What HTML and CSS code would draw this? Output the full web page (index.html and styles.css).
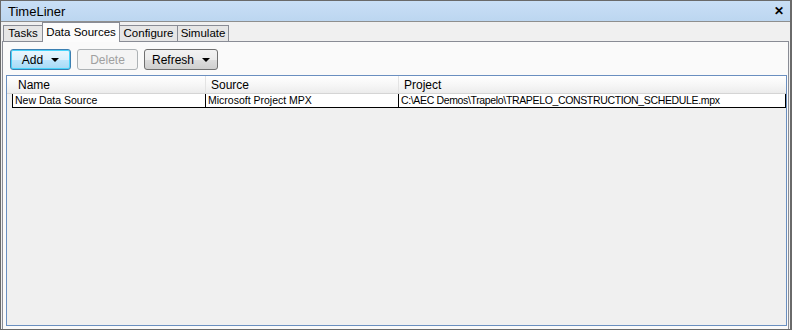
FILE: index.html
```html
<!DOCTYPE html>
<html>
<head>
<meta charset="utf-8">
<link rel="stylesheet" href="styles.css">
</head>
<body>
<div class="window">
  <div class="titlebar">
    <span class="title">TimeLiner</span>
    <span class="close">✕</span>
  </div>
  <div class="tabstrip">
    <div class="tab t1">Tasks</div>
    <div class="tab t2 active">Data Sources</div>
    <div class="tab t3">Configure</div>
    <div class="tab t4">Simulate</div>
  </div>
  <div class="page">
    <div class="toolbar">
      <button class="btn focused">Add <span class="arrow"></span></button>
      <button class="btn disabled">Delete</button>
      <button class="btn wide">Refresh <span class="arrow"></span></button>
    </div>
    <div class="list">
      <div class="header">
        <div class="col c1">Name</div>
        <div class="col c2">Source</div>
        <div class="col c3">Project</div>
      </div>
      <div class="row">
        <div class="cell c1">New Data Source</div>
        <div class="cell c2">Microsoft Project MPX</div>
        <div class="cell c3">C:\AEC Demos\Trapelo\TRAPELO_CONSTRUCTION_SCHEDULE.mpx</div>
      </div>
    </div>
  </div>
</div>
</body>
</html>
```
FILE: styles.css
```css
* { box-sizing: border-box; }
html, body { margin: 0; padding: 0; }
body {
  width: 792px; height: 330px; overflow: hidden;
  font-family: "Liberation Sans", Arial, sans-serif;
  font-size: 11px; color: #000;
  background: #fff;
}
.window {
  width: 792px; height: 330px;
  border: 1px solid #6a6a6a;
  border-right-width: 2px;
  display: flex; flex-direction: column;
  background: #f0f0f0;
}
.titlebar {
  height: 21px;
  background: linear-gradient(#c9dff6, #bcd6f0);
  display: flex; align-items: center; justify-content: space-between;
  padding: 0 6px 0 7px;
  border-bottom: 1px solid #8e8f8f;
  font-size: 13px;
}
.close { font-size: 12px; font-weight: bold; }
.tabstrip {
  height: 19px;
  display: flex; align-items: flex-end;
  padding-left: 2px;
  background: #f0f0f0;
  position: relative; z-index: 1;
}
.tab {
  height: 16px;
  border: 1px solid #898c95;
  border-bottom: none;
  border-right: none;
  background: #e6e6e6;
  display: flex; align-items: center; justify-content: center;
  line-height: 1;
  font-size: 11.5px;
}
.t1 { width: 39px; }
.t2 { width: 78px; }
.t3 { width: 57px; }
.t4 { width: 52px; }
.tab:last-child { border-right: 1px solid #898c95; }
.tab.active {
  height: 20px; margin-bottom: -1px;
  background: #fcfcfc;
  border-right: 1px solid #898c95;
}
.tab.active + .tab { border-left: none; }
.page {
  flex: 1;
  margin: 0 1px 0 1px;
  border: 1px solid #898c95;
  border-bottom: none;
  background: #fafafa;
  padding: 7px 1px 3px 3px;
  display: flex; flex-direction: column;
}
.toolbar { display: flex; gap: 6px; padding-left: 4px; height: 21px; margin-bottom: 5px; }
.btn {
  width: 61px; height: 21px;
  font-family: inherit; font-size: 12px;
  border: 1px solid #707070; border-radius: 3px;
  background: linear-gradient(#f2f2f2 0%, #ebebeb 50%, #dddddd 51%, #cfcfcf 100%);
  display: flex; align-items: center; justify-content: center; gap: 8px;
  padding: 0; color: #000;
}
.btn.wide { width: 74px; }
.btn.focused {
  border-color: #3c7fb1;
  background: linear-gradient(#eaf6fd 0%, #d9f0fc 50%, #bee6fd 51%, #a7d9f5 100%);
  box-shadow: inset 0 0 0 1px #48d4fb;
}
.btn.disabled {
  border-color: #adb2b5; background: #f4f4f4; color: #a0a0a0;
}
.arrow {
  width: 0; height: 0;
  border-left: 4px solid transparent; border-right: 4px solid transparent;
  border-top: 4px solid #000;
}
.list {
  flex: 1;
  border: 1px solid #6a8fc0;
  background: #f0f0f0;
}
.header {
  display: flex; height: 18px;
  background: linear-gradient(#ffffff, #f5f5f5 60%, #ececec);
  border-bottom: 1px solid #d5d5d5;
}
.col {
  padding-left: 5px; display: flex; align-items: center;
  border-right: 1px solid #e3e3e3;
  font-size: 12px;
}
.c1 { width: 199px; }
.c2 { width: 193px; }
.c3 { flex: 1; border-right: none; }
.header .c1 { padding-left: 11px; }
.row {
  display: flex; height: 14px;
  margin-left: 5px;
  background: #fff;
  border: 1px solid #000;
  border-top: none;
  line-height: 13px;
  font-size: 10.5px;
}
.cell { padding-left: 2px; white-space: nowrap; overflow: hidden; }
.row .c1 { width: 193px; border-right: 1px solid #000; }
.row .c2 { width: 193px; border-right: 1px solid #000; }
.row .c3 { letter-spacing: -0.35px; }
```
